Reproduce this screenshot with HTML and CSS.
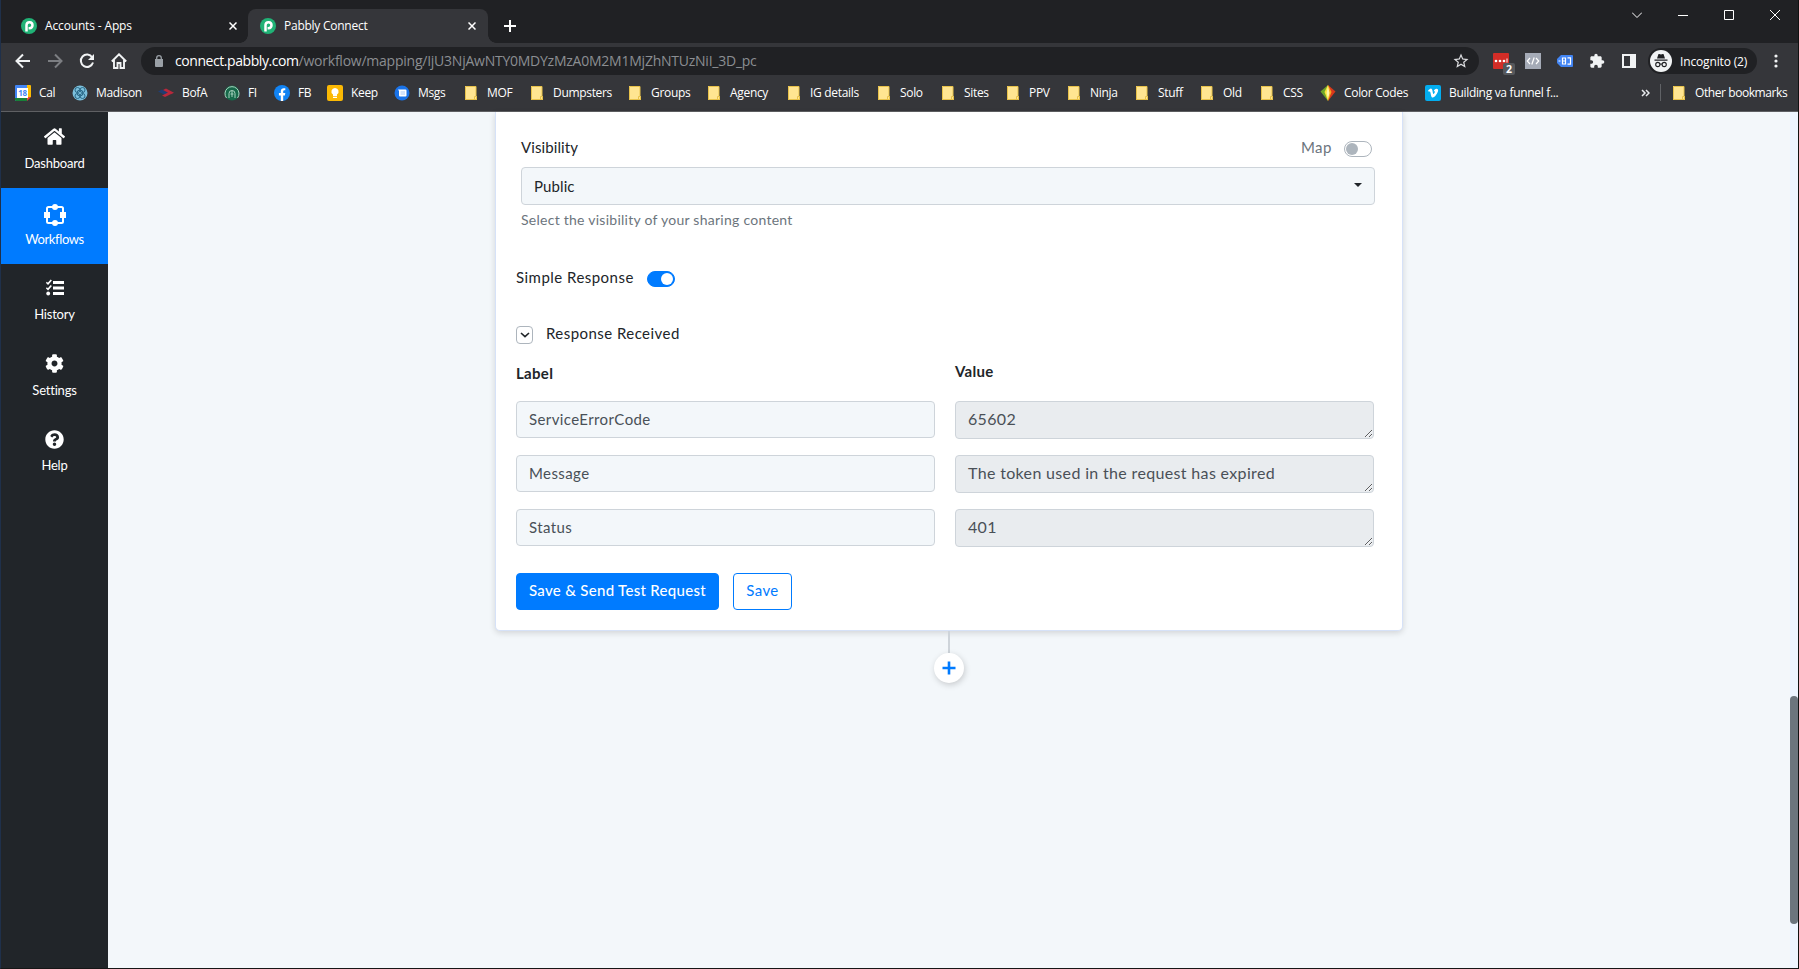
FILE: index.html
```html
<!DOCTYPE html>
<html lang="en">
<head>
    <meta charset="UTF-8">
    <meta name="viewport" content="width=device-width, initial-scale=1.0">
    <title>Pabbly Connect</title>
    <link rel="stylesheet" href="styles.css">
</head>
<body>
    <svg class="sprite" width="0" height="0">
        <symbol id="pabbly" viewBox="0 0 16 16">
            <circle cx="8" cy="8" r="8" fill="#20b276"/>
            <path d="M5.5 13.6V7a3 3 0 1 1 3 3.2H7.6" fill="none" stroke="#fff" stroke-width="2.5"/>
        </symbol>
        <symbol id="folder" viewBox="0 0 16 16">
            <path d="M2 1h11v10l1 .6V15H2z" fill="#ffe591"/>
            <path d="M2.5 15V1.5H13V11M2 14.5h12M11.5 14.5v-3h2v3" fill="none" stroke="#e8c24a"/>
        </symbol>
        <symbol id="close" viewBox="0 0 8 8">
            <path d="M.5.5l7 7M7.5.5l-7 7" fill="none" stroke="#fff" stroke-width="1.5"/>
        </symbol>
    </svg>

    <div class="browser">
        <div class="tabstrip">
            <div class="tab">
                <svg class="ico"><use href="#pabbly"/></svg>
                <span class="tab-title">Accounts - Apps</span>
                <svg class="tab-close"><use href="#close"/></svg>
            </div>
            <div class="tab active">
                <svg class="ico"><use href="#pabbly"/></svg>
                <span class="tab-title">Pabbly Connect</span>
                <svg class="tab-close"><use href="#close"/></svg>
            </div>
            <svg class="new-tab" viewBox="0 0 12 12"><path d="M6 0v12M0 6h12" stroke="#fff" stroke-width="2"/></svg>
            <div class="win-controls">
                <svg viewBox="0 0 10 10"><path d="M0 2.5l5 5 5-5" fill="none" stroke="#fff"/></svg>
                <svg viewBox="0 0 10 10"><path d="M0 5.5h10" stroke="#fff"/></svg>
                <svg viewBox="0 0 10 10"><path d="M.5.5h9v9h-9z" fill="none" stroke="#fff"/></svg>
                <svg viewBox="0 0 10 10"><path d="M0 0l10 10M10 0L0 10" stroke="#fff"/></svg>
            </div>
        </div>

        <div class="toolbar">
            <div class="nav">
                <svg viewBox="0 0 16 16"><path d="M15 8H2M8 1.5L1.5 8 8 14.5" fill="none" stroke="#f1f3f4" stroke-width="2"/></svg>
                <svg viewBox="0 0 16 16"><path d="M1 8h13M8 1.5L14.5 8 8 14.5" fill="none" stroke="#7c7e82" stroke-width="2"/></svg>
                <svg viewBox="0 0 16 16"><path d="M13.2 4.2A6.2 6.2 0 1 0 14 9.5" fill="none" stroke="#f1f3f4" stroke-width="2"/><path d="M15 1v6H9z" fill="#f1f3f4"/></svg>
                <svg viewBox="0 0 16 16"><path d="M.8 8.5L8 1.3l7.2 7.2M3 7v8h3.5v-5h3v5H13V7" fill="none" stroke="#f1f3f4" stroke-width="1.9"/></svg>
            </div>
            <div class="omnibox">
                <svg class="lock" viewBox="0 0 8 12"><path d="M0 4h8v7a1 1 0 0 1-1 1H1a1 1 0 0 1-1-1z" fill="#9aa0a6"/><path d="M1.7 5V3a2.3 2.3 0 0 1 4.6 0v2" fill="none" stroke="#9aa0a6" stroke-width="1.3"/></svg>
                <span class="host">connect.pabbly.com</span><span class="path">/workflow/mapping/IjU3NjAwNTY0MDYzMzA0M2M1MjZhNTUzNiI_3D_pc</span>
                <svg class="star" viewBox="0 0 24 24"><path d="M22 9.24l-7.19-.62L12 2 9.19 8.63 2 9.24l5.46 4.73L5.82 21 12 17.27 18.18 21l-1.63-7.03L22 9.24zM12 15.4l-3.76 2.27 1-4.28-3.32-2.88 4.38-.38L12 6.1l1.71 4.04 4.38.38-3.32 2.88 1 4.28L12 15.4z" fill="#dcdde0"/></svg>
            </div>
            <div class="extensions">
                <div class="ext">
                    <svg class="ico" viewBox="0 0 16 16"><rect width="16" height="16" rx="1" fill="#d32d27"/><circle cx="3" cy="8" r="1.3" fill="#fff"/><circle cx="7" cy="8" r="1.3" fill="#fff"/><circle cx="11" cy="8" r="1.3" fill="#fff"/><path d="M14 5.5v4" stroke="#fff"/></svg>
                    <span class="ext-badge">2</span>
                </div>
                <svg class="ico" viewBox="0 0 16 16"><rect width="16" height="16" fill="#a5abb7"/><path d="M5 5L2.3 8 5 11M11 5l2.7 3L11 11M9.2 4.5l-2.4 7" fill="none" stroke="#fff" stroke-width="1.2"/></svg>
                <svg class="ico" viewBox="0 0 16 16"><path d="M4 2h11a1 1 0 0 1 1 1v10a1 1 0 0 1-1 1H4L0 10V6z" fill="#4285f4"/><path d="M1.5 8h2M5.500 5h3v6h-3zM5.500 8h3M10.500 4.800h3v6.400h-3" fill="none" stroke="#fff" stroke-width="1.2"/></svg>
                <svg class="ico" viewBox="0 0 24 24"><path d="M20.5 11H19V7c0-1.1-.9-2-2-2h-4V3.500a2.500 2.500 0 0 0-5 0V5H4c-1.100 0-1.990.9-1.990 2v3.800H3.500c1.490 0 2.700 1.210 2.700 2.700s-1.210 2.700-2.700 2.700H2V20c0 1.100.9 2 2 2h3.800v-1.500c0-1.490 1.210-2.700 2.700-2.700s2.700 1.210 2.700 2.700V22H17c1.100 0 2-.9 2-2v-4h1.500a2.500 2.500 0 0 0 0-5z" fill="#f1f3f4"/></svg>
                <svg class="ico" viewBox="0 0 16 16"><path d="M1 1h14v14H1z" fill="#f1f3f4"/><path d="M3 3h6v10H3z" fill="#35363a"/></svg>
            </div>
            <div class="profile">
                <svg viewBox="0 0 22 22"><circle cx="11" cy="11" r="11" fill="#f1f3f4"/><path d="M7 8.500l1.300-4c.2-.5.600-.6 1-.5l1.700.4 1.700-.4c.4-.1.800 0 1 .5l1.300 4zM4.500 9.500h13v1.300h-13z" fill="#202124"/><g fill="none" stroke="#202124" stroke-width="1.1"><circle cx="7.800" cy="14.500" r="2.100"/><circle cx="14.200" cy="14.500" r="2.100"/><path d="M9.900 14.300q1.100-.6 2.200 0"/></g></svg>
                <span>Incognito (2)</span>
            </div>
            <svg class="more" viewBox="0 0 4 14"><circle cx="2" cy="2" r="1.6"/><circle cx="2" cy="7" r="1.6"/><circle cx="2" cy="12" r="1.6"/></svg>
        </div>

        <div class="bookmarks">
            <a><svg class="ico" viewBox="0 0 16 16"><path d="M0 1a1 1 0 0 1 1-1h11v4H4v12H1a1 1 0 0 1-1-1z" fill="#4285f4"/><path d="M12 0h3a1 1 0 0 1 1 1v11h-4z" fill="#fbbc04"/><path d="M0 13h12v3H1a1 1 0 0 1-1-1z" fill="#188038"/><path d="M12 12h4l-4 4z" fill="#ea4335"/><path d="M2 3h11v10H2z" fill="#fff"/><text x="7.600" y="11" text-anchor="middle" class="cal-num">18</text></svg>Cal</a>
            <a><svg class="ico" viewBox="0 0 16 16"><circle cx="8" cy="8" r="7.500" fill="#7cc0dc"/><g fill="none" stroke="#2b6a89"><circle cx="8" cy="8" r="3"/><circle cx="5.500" cy="5" r="2.500"/><circle cx="10.500" cy="5" r="2.500"/><circle cx="5.500" cy="11" r="2.500"/><circle cx="10.500" cy="11" r="2.500"/></g></svg>Madison</a>
            <a><svg class="ico" viewBox="0 0 16 16"><path d="M0 6.500l4-2 8 4-4 2z" fill="#1f3d73"/><path d="M5 5l3-1.500 8 4.300-3 1.500zM4 10.500l6-3 3 1.500-6 3z" fill="#b8283c"/></svg>BofA</a>
            <a><svg class="ico" viewBox="0 0 16 16"><circle cx="8" cy="8" r="7.500" fill="#17694a"/><g fill="none" stroke="#a9d3bf"><path d="M2.500 13A7 7 0 1 1 13.500 13"/><path d="M5 13V8.500a3 3 0 0 1 6 0V13M8 6v6M6.500 9h3"/></g></svg>FI</a>
            <a><svg class="ico" viewBox="0 0 16 16"><circle cx="8" cy="8" r="8" fill="#1183f3"/><path d="M6.800 16v-5.600H4.900V8h1.900V6.300c0-2 1.200-3.100 3-3.100.8 0 1.500.1 1.500.1v2h-.9c-.9 0-1.200.6-1.200 1.200V8h2.100l-.4 2.400H9.200V16z" fill="#fff"/></svg>FB</a>
            <a><svg class="ico" viewBox="0 0 16 16"><rect width="16" height="16" rx="2" fill="#fbb904"/><path d="M8 3a3.600 3.600 0 0 0-2 6.600V11h4V9.600A3.600 3.600 0 0 0 8 3zM6 11.800h4V13H6z" fill="#fff"/></svg>Keep</a>
            <a><svg class="ico" viewBox="0 0 16 16"><circle cx="8" cy="8" r="7.500" fill="#1a73e8"/><path d="M4 4.500h7.500a1 1 0 0 1 1 1v5a1 1 0 0 1-1 1H6a1 1 0 0 1-1-1V6z" fill="#fff"/><path d="M6.500 7h4.500M6.500 9h4.500" stroke="#a9c8f7"/></svg>Msgs</a>
            <a><svg class="ico"><use href="#folder"/></svg>MOF</a>
            <a><svg class="ico"><use href="#folder"/></svg>Dumpsters</a>
            <a><svg class="ico"><use href="#folder"/></svg>Groups</a>
            <a><svg class="ico"><use href="#folder"/></svg>Agency</a>
            <a><svg class="ico"><use href="#folder"/></svg>IG details</a>
            <a><svg class="ico"><use href="#folder"/></svg>Solo</a>
            <a><svg class="ico"><use href="#folder"/></svg>Sites</a>
            <a><svg class="ico"><use href="#folder"/></svg>PPV</a>
            <a><svg class="ico"><use href="#folder"/></svg>Ninja</a>
            <a><svg class="ico"><use href="#folder"/></svg>Stuff</a>
            <a><svg class="ico"><use href="#folder"/></svg>Old</a>
            <a><svg class="ico"><use href="#folder"/></svg>CSS</a>
            <a><svg class="ico" viewBox="0 0 16 16"><path d="M8 0L.5 6.500 8 16z" fill="#6fa52a"/><path d="M8 0L4.500 7 8 16z" fill="#f4e53a"/><path d="M8 0l7.500 6.500L8 16z" fill="#d8381c"/><path d="M8 0l3.500 7L8 16z" fill="#f7a51f"/><path d="M8 1L6.500 8 8 14l1.500-6z" fill="#fff6a8"/></svg>Color Codes</a>
            <a><svg class="ico" viewBox="0 0 16 16"><rect width="16" height="16" rx="2" fill="#03adef"/><path d="M3 5.700C4.200 4.600 5.200 3.600 5.900 3.600c1.400-.1 1.500 2.200 1.900 3.900.2 1 .5 1.500.7 1.500.5 0 1.500-1.700 1.400-2.300-.1-.6-.7-.5-1.200-.3.5-1.700 1.500-2.700 2.900-2.600 1.100 0 1.600.8 1.500 2-.1 1.900-3.300 6.800-5.300 6.800-1.600 0-1.800-2.800-2.400-5.200-.2-.8-.4-1.400-1.500-.7z" fill="#fff"/></svg>Building va funnel f...</a>
            <svg class="chevrons" viewBox="0 0 9 8"><path d="M1 1l3 3-3 3M5 1l3 3-3 3" fill="none" stroke="#e8eaed" stroke-width="1.500"/></svg>
            <a class="other"><svg class="ico"><use href="#folder"/></svg>Other bookmarks</a>
        </div>

        <div class="page">
            <nav class="sidebar">
                <a><svg width="21" height="19" viewBox="0 0 576 512"><path d="M280.370 148.260L96 300.110V464a16 16 0 0 0 16 16l112.060-.290a16 16 0 0 0 15.920-16V368a16 16 0 0 1 16-16h64a16 16 0 0 1 16 16v95.640a16 16 0 0 0 16 16.050L464 480a16 16 0 0 0 16-16V300L295.670 148.260a12.190 12.190 0 0 0-15.300 0zM571.600 251.470L488 182.560V44.050a12 12 0 0 0-12-12h-56a12 12 0 0 0-12 12v72.610L318.470 43a48 48 0 0 0-61 0L4.340 251.470a12 12 0 0 0-1.600 16.900l25.500 31A12 12 0 0 0 45.150 301l235.220-193.740a12.190 12.190 0 0 1 15.300 0L530.900 301a12 12 0 0 0 16.900-1.600l25.500-31a12 12 0 0 0-1.700-16.930z"/></svg><span>Dashboard</span></a>
                <a class="active"><svg width="22" height="22" viewBox="0 0 22 22"><rect x="3" y="3" width="16" height="16" rx="1.500" fill="none" stroke="#fff" stroke-width="2"/><path d="M0 8h6v6H0zM16 8h6v6h-6zM8 3a3 3 0 0 1 6 0 3 3 0 0 1-6 0zM8 19a3 3 0 0 1 6 0 3 3 0 0 1-6 0z"/></svg><span>Workflows</span></a>
                <a class="history"><svg width="18" height="18" viewBox="0 0 18 18"><path d="M7 2h11v3H7zM7 7.500h11v3H7zM7 13h11v3H7z"/><circle cx="2.200" cy="14.500" r="1.900"/><path d="M.3 3.300l1.700 1.500L5.300 1M.3 8.800l1.700 1.500 3.300-3.800" fill="none" stroke="#fff" stroke-width="1.600"/></svg><span>History</span></a>
                <a><svg width="19" height="19" viewBox="0 0 512 512"><path d="M487.400 315.700l-42.600-24.600c4.300-23.200 4.300-47 0-70.200l42.600-24.600c4.900-2.800 7.100-8.600 5.500-14-11.100-35.600-30-67.800-54.700-94.600-3.800-4.100-10-5.100-14.800-2.300L380.800 110c-17.900-15.400-38.500-27.300-60.800-35.100V25.800c0-5.600-3.900-10.500-9.400-11.700-36.700-8.200-74.300-7.800-109.200 0-5.500 1.200-9.400 6.100-9.400 11.700V75c-22.200 7.900-42.800 19.800-60.800 35.100L88.700 85.500c-4.900-2.800-11-1.900-14.800 2.300-24.700 26.700-43.600 58.900-54.700 94.600-1.700 5.400.6 11.200 5.500 14L67.300 221c-4.300 23.200-4.300 47 0 70.200l-42.600 24.600c-4.900 2.800-7.100 8.600-5.500 14 11.100 35.600 30 67.800 54.700 94.600 3.800 4.100 10 5.100 14.800 2.300l42.600-24.600c17.900 15.400 38.500 27.300 60.800 35.100v49.200c0 5.600 3.900 10.500 9.400 11.700 36.700 8.200 74.300 7.800 109.200 0 5.500-1.200 9.400-6.100 9.400-11.700v-49.200c22.200-7.900 42.800-19.800 60.800-35.100l42.600 24.600c4.900 2.800 11 1.900 14.800-2.300 24.700-26.700 43.600-58.900 54.700-94.600 1.500-5.500-.7-11.300-5.600-14.100zM256 336c-44.100 0-80-35.900-80-80s35.900-80 80-80 80 35.900 80 80-35.900 80-80 80z"/></svg><span>Settings</span></a>
                <a><svg width="19" height="19" viewBox="0 0 512 512"><path d="M504 256c0 136.997-111.043 248-248 248S8 392.997 8 256C8 119.083 119.043 8 256 8s248 111.083 248 248zM262.655 90c-54.497 0-89.255 22.957-116.549 63.758-3.536 5.286-2.353 12.415 2.715 16.258l34.699 26.310c5.205 3.947 12.621 3.008 16.665-2.122 17.864-22.658 30.113-35.797 57.303-35.797 20.429 0 45.698 13.148 45.698 32.958 0 14.976-12.363 22.667-32.534 33.976C247.128 238.528 216 254.941 216 296v4c0 6.627 5.373 12 12 12h56c6.627 0 12-5.373 12-12v-1.333c0-28.462 83.186-29.647 83.186-106.667 0-58.002-60.165-102-116.531-102zM256 338c-25.365 0-46 20.635-46 46 0 25.364 20.635 46 46 46s46-20.636 46-46c0-25.365-20.635-46-46-46z"/></svg><span>Help</span></a>
            </nav>

            <main class="content">
                <div class="card">
                    <div class="field">
                        <div class="field-head">
                            <label>Visibility</label>
                            <span class="map">Map <i class="switch"></i></span>
                        </div>
                        <div class="select"><span>Public</span><i class="caret"></i></div>
                        <small>Select the visibility of your sharing content</small>
                    </div>

                    <div class="simple">Simple Response <i class="switch on"></i></div>

                    <div class="received">
                        <span class="check"><svg width="10" height="6" viewBox="0 0 10 6"><path d="M1 1l4 3.700L9 1" fill="none" stroke="#212529" stroke-width="1.600"/></svg></span>
                        <span class="received-title">Response Received</span>
                    </div>

                    <div class="response">
                        <b>Label</b>
                        <b class="value-head">Value</b>
                        <input type="text" value="ServiceErrorCode">
                        <textarea rows="1" readonly>65602</textarea>
                        <input type="text" value="Message">
                        <textarea rows="1" readonly>The token used in the request has expired</textarea>
                        <input type="text" value="Status">
                        <textarea rows="1" readonly>401</textarea>
                    </div>

                    <div class="actions">
                        <button class="btn primary">Save &amp; Send Test Request</button>
                        <button class="btn">Save</button>
                    </div>
                </div>
                <div class="connector"></div>
                <button class="add"><svg width="14" height="14" viewBox="0 0 14 14"><path d="M7 .5v13M.5 7h13" stroke="#007bff" stroke-width="2.600"/></svg></button>
            </main>
            <div class="scroll"><div class="thumb"></div></div>
        </div>
    </div>
</body>
</html>
```
FILE: styles.css
```css
* {
    box-sizing: border-box;
}
body {
    margin: 0;
    overflow: hidden;
    font-family: Lato, sans-serif;
    font-size: 15px;
    color: #212529;
}
svg {
    display: block;
    flex: none;
}
.sprite {
    position: absolute;
}
.ico {
    width: 16px;
    height: 16px;
}
.browser {
    display: flex;
    flex-direction: column;
    height: 969px;
    border-left: 1px solid #1f304a;
    border-right: 1px solid #111;
    border-bottom: 1px solid #161616;
    background: #35363a;
}

/* browser chrome */
.tabstrip, .toolbar, .bookmarks {
    font-family: "Open Sans", sans-serif;
    font-size: 12px;
    letter-spacing: -.15px;
    color: #fff;
    display: flex;
    align-items: center;
}
.tabstrip {
    height: 43px;
    background: #202124;
    align-items: stretch;
}
.tab {
    display: flex;
    align-items: center;
    margin-top: 9px;
    padding: 0 12px;
    width: 240px;
    height: 34px;
    position: relative;
}
.tab:first-child {
    width: 247px;
    padding: 0 11px 0 20px;
}
.tab.active {
    background: #35363a;
    border-radius: 8px 8px 0 0;
}
.tab.active::before, .tab.active::after {
    content: "";
    position: absolute;
    bottom: 0;
    width: 8px;
    height: 8px;
}
.tab.active::before {
    left: -8px;
    background: radial-gradient(circle at 0 0, #202124 7.5px, #35363a 8px);
}
.tab.active::after {
    right: -8px;
    background: radial-gradient(circle at 100% 0, #202124 7.5px, #35363a 8px);
}
.tab-title {
    flex: 1;
    margin-left: 8px;
    padding-bottom: 2px;
}
.tab.active .tab-title {
    letter-spacing: -.25px;
}
.tab-close {
    width: 8px;
    height: 8px;
}
.new-tab {
    width: 12px;
    height: 12px;
    margin: 20px 0 0 16px;
}
.win-controls {
    display: flex;
    gap: 36px;
    margin: 10px 18px 0 auto;
}
.win-controls svg {
    width: 10px;
    height: 10px;
}
.toolbar {
    height: 36px;
}
.nav {
    display: flex;
    gap: 16px;
    padding-left: 14px;
    width: 140px;
}
.nav svg {
    width: 16px;
    height: 16px;
}
.omnibox {
    display: flex;
    align-items: center;
    width: 1338px;
    height: 28px;
    border-radius: 14px;
    background: #202124;
    font-size: 14px;
    padding: 0 9px 0 14px;
}
.omnibox span {
    padding-bottom: 2px;
}
.lock {
    width: 8px;
    height: 12px;
    margin: 0 12px 0 0;
}
.host {
    letter-spacing: -.43px;
}
.path {
    color: #8b8e92;
    letter-spacing: -.24px;
}
.star {
    width: 18px;
    height: 18px;
    margin-left: auto;
}
.extensions {
    display: flex;
    gap: 16px;
    margin-left: 14px;
}
.ext {
    position: relative;
}
.ext-badge {
    position: absolute;
    left: 10px;
    top: 10px;
    width: 12px;
    height: 12px;
    border-radius: 2px;
    background: #55585c;
    font-size: 10.5px;
    font-weight: 700;
    line-height: 12px;
    text-align: center;
}
.profile {
    display: flex;
    align-items: center;
    gap: 8px;
    margin-left: 11px;
    width: 109px;
    height: 26px;
    padding-left: 2px;
    border-radius: 13px;
    background: #202124;
    white-space: nowrap;
}
.profile svg {
    width: 22px;
    height: 22px;
}
.more {
    width: 4px;
    height: 14px;
    margin-left: 17px;
    fill: #f1f3f4;
}
.bookmarks {
    display: grid;
    grid-template-columns: 57px 86px 66px 50px 53px 67px 69px 66px 98px 79px 80px 90px 64px 65px 61px 68px 65px 60px 61px 105px 216px 19px 1fr;
    height: 33px;
    padding-left: 14px;
    padding-bottom: 5px;
    border-bottom: 1px solid #5f6063;
    letter-spacing: -.32px;
}
.bookmarks a {
    display: flex;
    align-items: center;
    gap: 8px;
    white-space: nowrap;
}
.bookmarks .other {
    border-left: 1px solid #606266;
    padding-left: 10px;
    letter-spacing: -.42px;
}
.chevrons {
    width: 9px;
    height: 8px;
}
.cal-num {
    font-size: 8px;
    font-weight: 700;
    fill: #4285f4;
}

/* app */
.page {
    flex: 1;
    display: flex;
    min-height: 0;
    background: #f3f7fa;
}
.sidebar {
    width: 107px;
    background: #212529;
}
.sidebar a {
    display: flex;
    flex-direction: column;
    align-items: center;
    justify-content: space-between;
    height: 75.5px;
    padding: 15px 0 17px;
    color: #fff;
    fill: #fff;
    font-size: 13px;
    line-height: 16px;
    letter-spacing: -.2px;
}
.sidebar a:first-child {
    height: 76px;
}
.sidebar a.active {
    height: 76px;
    padding-top: 16px;
    background: #007bff;
    letter-spacing: -.4px;
}
.sidebar a.history {
    height: 75px;
}
.content {
    flex: 1;
    display: flex;
    flex-direction: column;
    align-items: center;
    letter-spacing: .4px;
}
.card {
    width: 908px;
    height: 519px;
    padding: 24px 28px 0 20px;
    background: #fff;
    border: 1px solid #d6e2f8;
    border-top: 0;
    border-radius: 0 0 5px 5px;
    box-shadow: 0 2px 6px rgba(0, 0, 0, .14);
}
.field {
    margin-right: -1px;
    padding-left: 5px;
    height: 121px;
}
.field-head {
    display: flex;
    justify-content: space-between;
    height: 31px;
    line-height: 22px;
    letter-spacing: .1px;
}
.map {
    display: flex;
    align-items: center;
    gap: 12px;
    height: 22px;
    padding-right: 3px;
    letter-spacing: .5px;
    color: #6c757d;
}
.switch {
    width: 28px;
    height: 16px;
    margin-top: 3px;
    padding: 1px;
    border: 1px solid #adb5bd;
    border-radius: 8px;
    display: flex;
}
.switch::before {
    content: "";
    width: 12px;
    height: 12px;
    border-radius: 50%;
    background: #adb5bd;
}
.switch.on {
    background: #007bff;
    border-color: #007bff;
    justify-content: flex-end;
}
.switch.on::before {
    background: #fff;
}
.select {
    display: flex;
    align-items: center;
    justify-content: space-between;
    height: 38px;
    padding: 0 12px;
    border: 1px solid #ced4da;
    border-radius: 4px;
    background: #f3f7fa;
    letter-spacing: .1px;
}
.caret {
    border: 4.5px solid transparent;
    border-top-color: #212529;
    border-bottom: 0;
    margin-top: -2px;
}
small {
    display: block;
    margin-top: 5px;
    font-size: 14px;
    line-height: 20px;
    letter-spacing: .26px;
    color: #6c757d;
}
.simple {
    display: flex;
    align-items: center;
    gap: 13px;
    height: 40px;
    letter-spacing: .47px;
}
.received {
    display: flex;
    align-items: center;
    gap: 13px;
    height: 22px;
    margin-top: 27px;
    letter-spacing: .45px;
}
.received-title {
    padding-bottom: 4px;
}
.check {
    display: flex;
    align-items: center;
    justify-content: center;
    width: 17px;
    height: 18px;
    border: 1px solid #adb5bd;
    border-radius: 4px;
}
.response {
    display: grid;
    grid-template-columns: 419px 419px;
    column-gap: 20px;
    grid-template-rows: 38px 38px 38px 38px;
    row-gap: 16px;
    margin-top: 1px;
}
.response b {
    padding-top: 17px;
    letter-spacing: .3px;
}
.response .value-head {
    padding-top: 15px;
}
input, textarea {
    width: 100%;
    height: 37px;
    margin: 0;
    padding: 5px 12px 7px;
    border: 1px solid #ced4da;
    border-radius: 4px;
    background: #f3f7fa;
    font-family: inherit;
    font-size: 15px;
    letter-spacing: inherit;
    color: #495057;
}
textarea {
    height: 38px;
    overflow: hidden;
    background: #e9ecef;
    font-size: 16px;
    line-height: 24px;
    letter-spacing: .34px;
    resize: both;
}
.actions {
    display: flex;
    gap: 14px;
    margin-top: 26px;
}
.btn {
    width: 59px;
    height: 37px;
    padding: 0 0 3px;
    border: 1px solid #007bff;
    border-radius: 4px;
    background: #fff;
    color: #007bff;
    font-family: inherit;
    font-size: 15px;
    letter-spacing: inherit;
    white-space: nowrap;
}
.btn.primary {
    width: 203px;
    background: #007bff;
    color: #fff;
    font-weight: 500;
    letter-spacing: .3px;
}
.connector {
    width: 2px;
    height: 22px;
    background: #ced4da;
}
.add {
    display: flex;
    align-items: center;
    justify-content: center;
    width: 30px;
    height: 30px;
    padding: 0;
    border: 0;
    border-radius: 50%;
    background: #fff;
    box-shadow: 1px 2px 6px rgba(0, 0, 0, .18);
}
.scroll {
    width: 8px;
    background: #edf5ff;
    padding-top: 584px;
}
.thumb {
    height: 228px;
    border-radius: 4px;
    background: #6c757d;
}
```
